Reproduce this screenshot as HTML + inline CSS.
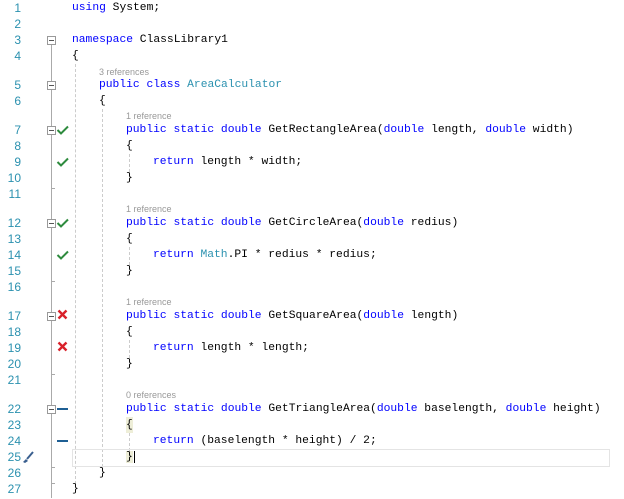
<!DOCTYPE html>
<html><head><meta charset="utf-8"><style>
html,body{margin:0;padding:0;background:#fff;width:624px;height:499px;overflow:hidden;position:relative}
#w{position:absolute;left:0;top:2px;width:624px;height:499px}
.n{position:absolute;left:0;width:21px;text-align:right;font:12px "Liberation Sans",sans-serif;color:#2b91af;height:16px;line-height:16px}
.c{position:absolute;font:11.3px "Liberation Mono",monospace;color:#000;white-space:pre;height:16px;line-height:16px}
.r{position:absolute;font:9px "Liberation Sans",sans-serif;color:#999;white-space:pre;height:12px;line-height:12px}
.k{color:#0000ff}.t{color:#2b91af}
.g{position:absolute;border-left:1px dashed #ccc;width:0}
.fb{position:absolute;left:47px;width:7px;height:7px;border:1px solid #999;background:#fff}
.fb:after{content:"";position:absolute;left:1px;top:3px;width:5px;height:1px;background:#555}
.tick{position:absolute;left:51px;width:4px;height:1px;background:#aaa}
.ic{position:absolute;left:56px}
.d{position:absolute;left:57px;width:11px;height:2px;background:#1e5f94}
</style></head><body><div id="w">
<div style="position:absolute;left:51px;top:38px;width:1px;height:458px;background:#aaa"></div>
<div class="tick" style="top:186px"></div><div class="tick" style="top:279px"></div><div class="tick" style="top:372px"></div><div class="tick" style="top:465px"></div><div class="tick" style="top:481px"></div>
<div class="g" style="left:75px;top:62px;height:420px"></div>
<div class="g" style="left:102px;top:107px;height:358px"></div>
<div class="g" style="left:129px;top:152px;height:18px"></div>
<div class="g" style="left:129px;top:245px;height:18px"></div>
<div class="g" style="left:129px;top:338px;height:18px"></div>
<div class="g" style="left:129px;top:431px;height:18px"></div>
<div style="position:absolute;left:72px;top:447px;width:536px;height:16px;border:1px solid #e4e4e4"></div>

<div class="fb" style="top:34px"></div><div class="fb" style="top:79px"></div><div class="fb" style="top:124px"></div><div class="fb" style="top:217px"></div><div class="fb" style="top:310px"></div><div class="fb" style="top:403px"></div>
<svg class="ic" style="top:122px" width="14" height="12"><path d="M1.5 6 L5 9.5 L12 2.5" stroke="#2e8b3e" stroke-width="2" fill="none"/></svg>
<svg class="ic" style="top:154px" width="14" height="12"><path d="M1.5 6 L5 9.5 L12 2.5" stroke="#2e8b3e" stroke-width="2" fill="none"/></svg>
<svg class="ic" style="top:215px" width="14" height="12"><path d="M1.5 6 L5 9.5 L12 2.5" stroke="#2e8b3e" stroke-width="2" fill="none"/></svg>
<svg class="ic" style="top:247px" width="14" height="12"><path d="M1.5 6 L5 9.5 L12 2.5" stroke="#2e8b3e" stroke-width="2" fill="none"/></svg>
<svg class="ic" style="top:307px" width="14" height="12"><path d="M2.5 1.5 L10.5 9.5 M10.5 1.5 L2.5 9.5" stroke="#d9212a" stroke-width="2.4" fill="none"/></svg>
<svg class="ic" style="top:339px" width="14" height="12"><path d="M2.5 1.5 L10.5 9.5 M10.5 1.5 L2.5 9.5" stroke="#d9212a" stroke-width="2.4" fill="none"/></svg>
<div class="d" style="top:406px"></div><div class="d" style="top:438px"></div>
<svg style="position:absolute;left:21px;top:448px" width="14" height="14" viewBox="0 0 14 14"><path d="M2 12 L5 9 L7 11 L4 13 Z" fill="#3a5f8f"/><path d="M6 9 L12 2" stroke="#3a5f8f" stroke-width="2"/></svg>

<div class="n" style="top:-2px">1</div><div class="c" style="left:72px;top:-2px"><span class="k">using</span> System;</div>
<div class="n" style="top:14px">2</div>
<div class="n" style="top:30px">3</div><div class="c" style="left:72px;top:30px"><span class="k">namespace</span> ClassLibrary1</div>
<div class="n" style="top:46px">4</div><div class="c" style="left:72px;top:46px">{</div>
<div class="r" style="left:99px;top:64px">3 references</div>
<div class="n" style="top:75px">5</div><div class="c" style="left:99px;top:75px"><span class="k">public class</span> <span class="t">AreaCalculator</span></div>
<div class="n" style="top:91px">6</div><div class="c" style="left:99px;top:91px">{</div>
<div class="r" style="left:126px;top:108px">1 reference</div>
<div class="n" style="top:120px">7</div><div class="c" style="left:126px;top:120px"><span class="k">public static double</span> GetRectangleArea(<span class="k">double</span> length, <span class="k">double</span> width)</div>
<div class="n" style="top:136px">8</div><div class="c" style="left:126px;top:136px">{</div>
<div class="n" style="top:152px">9</div><div class="c" style="left:153px;top:152px"><span class="k">return</span> length * width;</div>
<div class="n" style="top:168px">10</div><div class="c" style="left:126px;top:168px">}</div>
<div class="n" style="top:184px">11</div>
<div class="r" style="left:126px;top:201px">1 reference</div>
<div class="n" style="top:213px">12</div><div class="c" style="left:126px;top:213px"><span class="k">public static double</span> GetCircleArea(<span class="k">double</span> redius)</div>
<div class="n" style="top:229px">13</div><div class="c" style="left:126px;top:229px">{</div>
<div class="n" style="top:245px">14</div><div class="c" style="left:153px;top:245px"><span class="k">return</span> <span class="t">Math</span>.PI * redius * redius;</div>
<div class="n" style="top:261px">15</div><div class="c" style="left:126px;top:261px">}</div>
<div class="n" style="top:277px">16</div>
<div class="r" style="left:126px;top:294px">1 reference</div>
<div class="n" style="top:306px">17</div><div class="c" style="left:126px;top:306px"><span class="k">public static double</span> GetSquareArea(<span class="k">double</span> length)</div>
<div class="n" style="top:322px">18</div><div class="c" style="left:126px;top:322px">{</div>
<div class="n" style="top:338px">19</div><div class="c" style="left:153px;top:338px"><span class="k">return</span> length * length;</div>
<div class="n" style="top:354px">20</div><div class="c" style="left:126px;top:354px">}</div>
<div class="n" style="top:370px">21</div>
<div class="r" style="left:126px;top:387px">0 references</div>
<div class="n" style="top:399px">22</div><div class="c" style="left:126px;top:399px"><span class="k">public static double</span> GetTriangleArea(<span class="k">double</span> baselength, <span class="k">double</span> height)</div>
<div class="n" style="top:415px">23</div><div class="c" style="left:126px;top:415px;background:#eeeed8">{</div>
<div class="n" style="top:431px">24</div><div class="c" style="left:153px;top:431px"><span class="k">return</span> (baselength * height) / 2;</div>
<div class="n" style="top:447px">25</div><div class="c" style="left:126px;top:447px"><span style="background:#eeeed8">}</span><span style="border-left:1px solid #000;margin-left:1px"></span></div>
<div class="n" style="top:463px">26</div><div class="c" style="left:99px;top:463px">}</div>
<div class="n" style="top:479px">27</div><div class="c" style="left:72px;top:479px">}</div>
</div></body></html>
